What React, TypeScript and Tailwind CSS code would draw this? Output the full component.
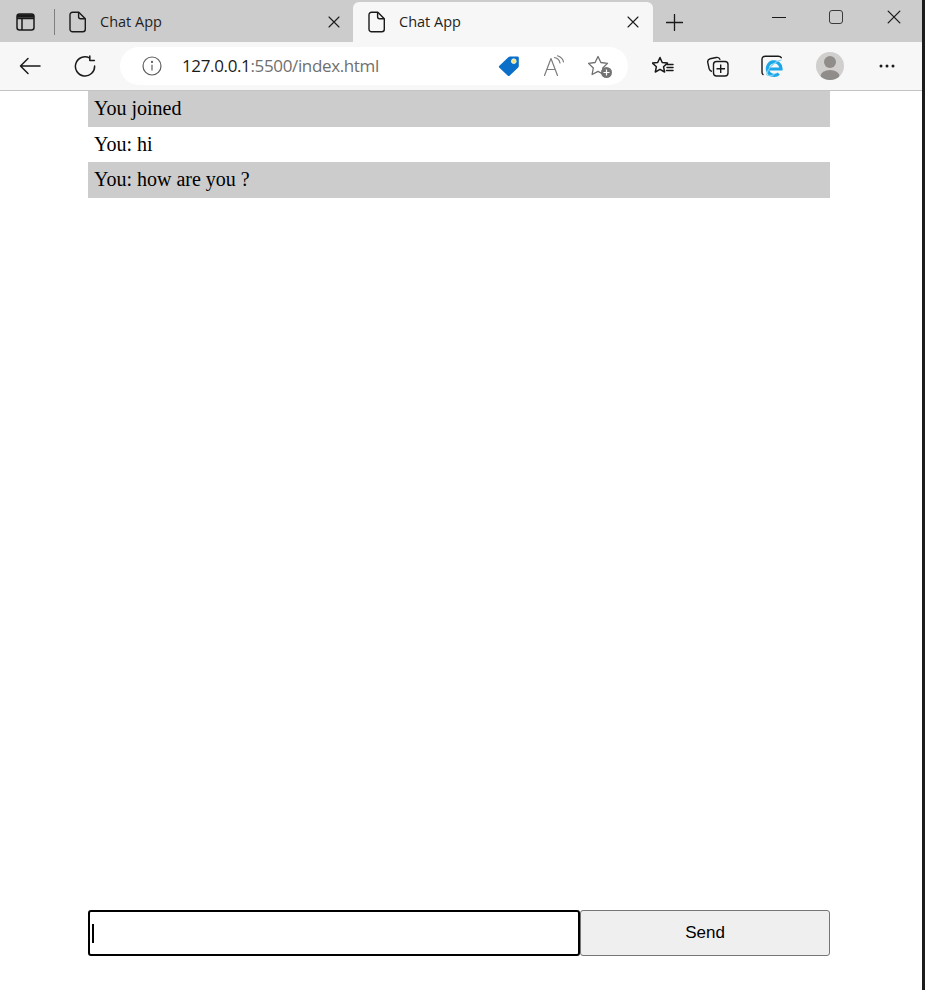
import React from 'react';

const FileIcon = () => (
  <svg width="18" height="22" viewBox="0 0 18 22" fill="none" stroke="#1a1a1a" strokeWidth="1.4" strokeLinejoin="round">
    <path d="M3.5 1.2h6.3l6.5 6.6v10.5a2.5 2.5 0 0 1-2.5 2.5h-10.3a2.5 2.5 0 0 1-2.5-2.5v-14.6a2.5 2.5 0 0 1 2.5-2.5z" />
    <path d="M9.6 1.4v4.4a2 2 0 0 0 2 2h4.500" />
  </svg>
);

const CloseIcon = ({ size = 12 }: { size?: number }) => (
  <svg width={size} height={size} viewBox="0 0 12 12" stroke="#1a1a1a" strokeWidth="1.1" strokeLinecap="round">
    <path d="M1 1l10 10M11 1l-10 10" />
  </svg>
);

const Tab = ({ active }: { active?: boolean }) => (
  <div className={`flex h-[40px] items-center rounded-t-[6px] ${active ? 'w-[300px] bg-[#f7f7f7] pl-[15px] pr-[14px]' : 'w-[284px] pr-[13px]'}`}>
    <FileIcon />
    <span className="ml-[13px] flex-1 text-[14.5px] text-[#1f1f1f]">Chat App</span>
    <CloseIcon />
  </div>
);

const Toolbar = () => (
  <div className="flex h-[49px] items-center border-b border-[#c4c4c4] bg-[#f7f7f7]">
    <div className="ml-[19px] flex w-[101px] items-center gap-[33px]">
      <svg width="22" height="18" viewBox="0 0 22 18" fill="none" stroke="#1a1a1a" strokeWidth="1.5" strokeLinecap="round" strokeLinejoin="round">
        <path d="M21 9H1.500M9 1.500L1.500 9l7.500 7.500" />
      </svg>
      <svg width="22" height="22" viewBox="0 0 22 22" fill="none" stroke="#1a1a1a" strokeWidth="1.5" strokeLinecap="round" strokeLinejoin="round">
        <path d="M15.500 2.900A9.600 9.600 0 1 0 20.600 11" />
        <path d="M15.800 0.900v4.600h4.600" />
      </svg>
    </div>
    <div className="flex h-[38px] w-[508px] items-center rounded-full bg-white pl-[22px] pr-[17px]">
      <svg width="20" height="20" viewBox="0 0 20 20" fill="none" stroke="#5e5e5e" strokeWidth="1.2">
        <circle cx="10" cy="10" r="9" />
        <path d="M10 8.800v5.600" />
        <circle cx="10" cy="5.900" r="0.500" fill="#5e5e5e" />
      </svg>
      <span className="ml-[20px] flex-1 text-[17px] tracking-[-0.36px] text-[#6f6f6f]">
        <span className="text-[#1a1a1a]">127.0.0.1</span>:5500/index.html
      </span>
      <div className="flex items-center gap-[23px]">
        <svg width="22" height="22" viewBox="0 0 22 22">
          <path d="M12 1.500h7.500a1.300 1.300 0 0 1 1.300 1.300v8.200a2 2 0 0 1-.6 1.400l-8.400 8a1.600 1.600 0 0 1-2.200 0l-8.200-7.600a1.400 1.400 0 0 1 0-2.100l9.200-8.600a2 2 0 0 1 1.400-.6z" fill="#0a6fc9" />
          <circle cx="15.800" cy="6.200" r="2.400" fill="#f3e27a" stroke="#ffffff" strokeWidth="0.700" />
        </svg>
        <svg width="22" height="22" viewBox="0 0 22 22" fill="none" stroke="#7c7c7c" strokeWidth="1.2" strokeLinecap="round" strokeLinejoin="round">
          <path d="M1.500 20.500L8 3.500l6.500 17M3.800 14.500h8.400" />
          <path d="M11.500 2.500c3 .6 5 2.500 5.500 5.500" />
          <path d="M14.500 0.800c3 .9 5.400 3.200 6 6.200" />
        </svg>
        <div className="relative h-[22px] w-[23px]">
          <svg width="23" height="22" viewBox="0 0 23 22" fill="none" stroke="#6e6e6e" strokeWidth="1.3" strokeLinejoin="round">
            <path d="M10 1.500l2.900 6 6.600.9-4.800 4.600 1.100 6.500-5.800-3.100-5.900 3.100 1.200-6.500-4.800-4.600 6.600-.9z" />
          </svg>
          <div className="absolute bottom-[-1px] right-[-1px] flex h-[11px] w-[11px] items-center justify-center rounded-full bg-[#737373]">
            <svg width="7" height="7" viewBox="0 0 7 7" stroke="#ffffff" strokeWidth="1.2">
              <path d="M3.500 0.500v6M0.500 3.500h6" />
            </svg>
          </div>
        </div>
      </div>
    </div>
    <div className="ml-[24px] flex items-center">
      <svg width="22" height="21" viewBox="0 0 22 21" fill="none" stroke="#1a1a1a" strokeWidth="1.5" strokeLinejoin="round" strokeLinecap="round">
        <path d="M8 1.500l2.200 5 5.300.6-4 3.600 1.100 5.300-4.600-2.700-4.700 2.700 1.100-5.300-4-3.600 5.300-.6z" />
        <path d="M15 8.500h6M15 11.500h6M14.500 14.500h6.500" />
      </svg>
      <svg className="ml-[33px]" width="22" height="22" viewBox="0 0 22 22" fill="none" stroke="#1a1a1a" strokeWidth="1.4" strokeLinejoin="round">
        <path d="M5 16.500c-1.500-.4-2.400-1.300-2.900-2.800l-1.300-6c-.4-2 .5-3.400 2.400-3.900l6-1.300c1.900-.4 3.300.4 4 2.200" />
        <rect x="6.500" y="6.500" width="14.500" height="14.500" rx="3" />
        <path d="M13.700 9.500v8.500M9.500 13.700h8.500" />
      </svg>
      <svg className="ml-[32px]" width="22" height="22" viewBox="0 0 22 22" fill="none">
        <path d="M2 19.500c-.7-.6-1-1.300-1-2.200v-12.800c0-2 1.300-3.300 3.300-3.300h13c1.400 0 2.400.5 3 1.500" stroke="#1a1a1a" strokeWidth="1.400" strokeLinecap="round" />
        <path d="M8 14h12a6.800 6.800 0 1 0-2.200 4.600" stroke="#1ea7e8" strokeWidth="3.200" />
        <path d="M5.500 19.500c1-5 7-13 15-14.500M5.500 19.500c1.500 1.800 5 1.200 8 0" stroke="#7fd0f2" strokeWidth="1.100" />
      </svg>
      <div className="ml-[33px] flex h-[28px] w-[28px] items-end justify-center overflow-hidden rounded-full bg-[#d1cfcd]">
        <svg width="28" height="28" viewBox="0 0 28 28" fill="#8f8c8a">
          <circle cx="14" cy="10" r="6" />
          <ellipse cx="14" cy="24" rx="9.500" ry="6" />
        </svg>
      </div>
      <svg className="ml-[35px]" width="16" height="4" viewBox="0 0 16 4" fill="#1a1a1a">
        <circle cx="2" cy="2" r="1.500" />
        <circle cx="8" cy="2" r="1.500" />
        <circle cx="14" cy="2" r="1.500" />
      </svg>
    </div>
  </div>
);

const TabStrip = () => (
  <div className="flex h-[42px] items-end bg-[#cccccc]">
    <div className="flex h-[40px] items-center pl-[16px]">
      <svg width="19" height="18" viewBox="0 0 19 18" fill="none" stroke="#1a1a1a" strokeWidth="1.5">
        <rect x="1" y="1" width="17" height="16" rx="2.500" />
        <path d="M1 5.500h17M6 5.500v11.500" />
        <path d="M1 3h17" strokeWidth="3.500" />
      </svg>
      <div className="ml-[19px] mr-[14px] h-[26px] w-px bg-[#7f7f7f]" />
    </div>
    <Tab />
    <Tab active />
    <div className="flex h-[40px] flex-1 items-center">
      <svg className="ml-[13px]" width="17" height="17" viewBox="0 0 17 17" stroke="#1a1a1a" strokeWidth="1.300" strokeLinecap="round">
        <path d="M8.500 0.500v16M0.500 8.500h16" />
      </svg>
      <div className="-mt-[10px] ml-[89px] flex items-center">
        <div className="h-px w-[14px] bg-[#1a1a1a]" />
        <div className="ml-[43px] h-[14px] w-[14px] rounded-[3px] border-[1.500px] border-[#3a3a3a]" />
        <div className="ml-[44px]">
          <CloseIcon size={14} />
        </div>
      </div>
    </div>
  </div>
);

export default function App() {
  const messages = ['You joined', 'You: hi', 'You: how are you ?'];

  return (
    <div className="flex h-[990px] w-[925px] overflow-hidden bg-white font-['Open_Sans',sans-serif]">
      <div className="flex w-[922px] flex-col">
        <TabStrip />
        <Toolbar />
        <div className="flex flex-1 flex-col pl-[88px] pr-[92px] pb-[34px] font-['Liberation_Serif',serif] text-[20px] text-black">
          <ul className="flex-1">
            {messages.map((msg, idx) => (
              <li key={idx} className={`h-[35.500px] px-[6px] leading-[35px] ${idx % 2 === 0 ? 'bg-[#cccccc]' : 'bg-white'}`}>
                {msg}
              </li>
            ))}
          </ul>
          <form className="flex h-[46px]">
            <div className="flex w-[492px] items-center rounded-[3px] border-2 border-black pl-[2px]">
              <div className="h-[19px] w-[2px] bg-black" />
            </div>
            <button type="button" className="w-[250px] rounded-[3px] border border-[#767676] bg-[#efefef] font-['Liberation_Sans',sans-serif] text-[17px] text-black">
              Send
            </button>
          </form>
        </div>
      </div>
      <div className="w-[3px] bg-[#1c1c1c]" />
    </div>
  );
}
